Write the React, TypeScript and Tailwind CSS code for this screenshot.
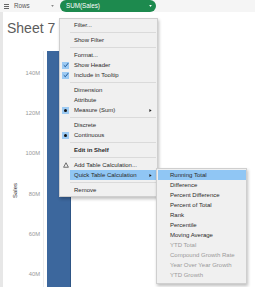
import React from 'react';

const font = { fontFamily: '"Liberation Sans", Arial, sans-serif' };

const CheckBox = () => (
  <span className="w-[7px] h-[7px] bg-[#9ccaf3] flex items-center justify-center">
    <svg viewBox="0 0 8 8" className="w-[6px] h-[6px]">
      <path d="M1 4.3 L3.1 6.3 L7 1.5" stroke="#1d5694" strokeWidth="1.3" fill="none" />
    </svg>
  </span>
);

const Bullet = () => (
  <span className="w-[7px] h-[7px] bg-[#9ccaf3] flex items-center justify-center">
    <span className="w-[3px] h-[3px] rounded-full bg-[#111]" />
  </span>
);

const Delta = () => (
  <svg viewBox="0 0 8 8" className="w-[6px] h-[6px]">
    <path d="M4 1 L7.2 7 L0.8 7 Z" stroke="#333" strokeWidth="0.9" fill="none" />
  </svg>
);

const Arrow = () => (
  <svg viewBox="0 0 4 4" className="w-[3px] h-[3px]">
    <path d="M0.5 0 L3.5 2 L0.5 4 Z" fill="#222" />
  </svg>
);

type Item = {
  label?: string;
  icon?: 'check' | 'bullet' | 'delta';
  sub?: boolean;
  active?: boolean;
  bold?: boolean;
  disabled?: boolean;
  sep?: boolean;
};

const MENU: Item[] = [
  { label: 'Filter...' },
  { sep: true },
  { label: 'Show Filter' },
  { sep: true },
  { label: 'Format...' },
  { label: 'Show Header', icon: 'check' },
  { label: 'Include in Tooltip', icon: 'check' },
  { sep: true },
  { label: 'Dimension' },
  { label: 'Attribute' },
  { label: 'Measure (Sum)', icon: 'bullet', sub: true },
  { sep: true },
  { label: 'Discrete' },
  { label: 'Continuous', icon: 'bullet' },
  { sep: true },
  { label: 'Edit in Shelf', bold: true },
  { sep: true },
  { label: 'Add Table Calculation...', icon: 'delta' },
  { label: 'Quick Table Calculation', sub: true, active: true },
  { sep: true },
  { label: 'Remove' },
];

const SUBMENU: Item[] = [
  { label: 'Running Total', active: true },
  { label: 'Difference' },
  { label: 'Percent Difference' },
  { label: 'Percent of Total' },
  { label: 'Rank' },
  { label: 'Percentile' },
  { label: 'Moving Average' },
  { label: 'YTD Total', disabled: true },
  { label: 'Compound Growth Rate', disabled: true },
  { label: 'Year Over Year Growth', disabled: true },
  { label: 'YTD Growth', disabled: true },
];

const MenuRow = ({ item, gutter, indent }: { item: Item; gutter: number; indent: number }) => {
  if (item.sep) {
    return (
      <div className="h-[5px] flex items-center pl-[10px] pr-[1px]">
        <div className="h-px w-full bg-[#dadada]" />
      </div>
    );
  }
  return (
    <div className="h-[10px] flex">
      <div className="flex items-center justify-end pr-[1px]" style={{ width: gutter }}>
        {item.icon === 'check' && <CheckBox />}
        {item.icon === 'bullet' && <Bullet />}
        {item.icon === 'delta' && (
          <span className="w-[7px] flex justify-center">
            <Delta />
          </span>
        )}
      </div>
      <div
        className={`flex-1 flex items-center pr-[5px] ${item.active ? 'bg-[#90c6f4]' : ''}`}
        style={{ paddingLeft: indent }}
      >
        <span
          className={`flex-1 text-[6px] leading-[10px] whitespace-nowrap ${
            item.disabled ? 'text-[#9a9a9a]' : 'text-[#2a2a2a]'
          } ${item.bold ? 'font-bold' : ''}`}
        >
          {item.label}
        </span>
        {item.sub && <Arrow />}
      </div>
    </div>
  );
};

export default function App() {
  const ticks = ['140M', '120M', '100M', '80M', '60M', '40M'];
  return (
    <div className="relative w-[255px] h-[287px] overflow-hidden bg-[#e7e7e7] flex flex-col" style={font}>
      <div className="h-[3px] bg-[#e4e4e4]" />
      {/* Shelf */}
      <div className="h-[15px] bg-[#f5f5f5] flex items-center">
        <div className="w-[57px] h-full flex items-center pl-[4px] pr-[3px]">
          <div className="flex flex-col gap-[1px] w-[5px]">
            <span className="h-px bg-[#666]" />
            <span className="h-px bg-[#666]" />
            <span className="h-px bg-[#666]" />
          </div>
          <span className="ml-[5px] text-[6.3px] text-[#555] flex-1">Rows</span>
          <svg viewBox="0 0 4 3" className="w-[3px] h-[2px]">
            <path d="M0 0 L4 0 L2 3 Z" fill="#888" />
          </svg>
        </div>
        <div className="ml-[3px] w-[96px] h-[12px] rounded-full bg-[#1d8a4e] flex items-center pl-[6px] pr-[4px]">
          <span className="flex-1 text-[6.3px] text-white">SUM(Sales)</span>
          <svg viewBox="0 0 4 3" className="w-[3px] h-[2px]">
            <path d="M0 0 L4 0 L2 3 Z" fill="#fff" />
          </svg>
        </div>
      </div>
      <div className="h-[4px] bg-[#e2e2e2]" />
      {/* Content */}
      <div className="flex-1 flex pl-[3px]">
        <div className="flex-1 bg-white flex flex-col">
          <div className="h-[39px] pl-[4px] pt-[4px]">
            <span className="text-[14px] leading-[16px] text-[#5c5c5c]">Sheet 7</span>
          </div>
          <div className="flex-1 flex">
            <div className="w-[16px] pl-[8px] pt-[132px]">
              <span className="block text-[6px] text-[#333] [writing-mode:vertical-rl] rotate-180">Sales</span>
            </div>
            <div className="w-[21px] pt-[17.5px] flex flex-col items-end">
              {ticks.map((t) => (
                <div key={t} className="h-[40.4px] shrink-0 text-[5.8px] leading-[8px] text-[#999]">
                  {t}
                </div>
              ))}
            </div>
            <div className="ml-[3px] w-px bg-[#ececec]" />
            <div className="ml-[3px] w-[24px] bg-[#3c679d] border-r border-[#2e5585]" />
          </div>
        </div>
      </div>

      {/* Context menu */}
      <div className="absolute left-[59px] top-[18px] w-[99px] bg-[#f0f0f0] border border-[#cfcfcf] shadow-[1px_2px_3px_rgba(0,0,0,0.25)] py-[1px]">
        {MENU.map((m, i) => (
          <MenuRow key={i} item={m} gutter={10} indent={4} />
        ))}
      </div>

      {/* Submenu */}
      <div className="absolute left-[156px] top-[168px] w-[91px] bg-[#f0f0f0] border border-[#cfcfcf] shadow-[1px_2px_3px_rgba(0,0,0,0.25)] pt-[1px] pb-[3px]">
        {SUBMENU.map((m, i) => (
          <MenuRow key={i} item={m} gutter={0} indent={12} />
        ))}
      </div>
    </div>
  );
}
